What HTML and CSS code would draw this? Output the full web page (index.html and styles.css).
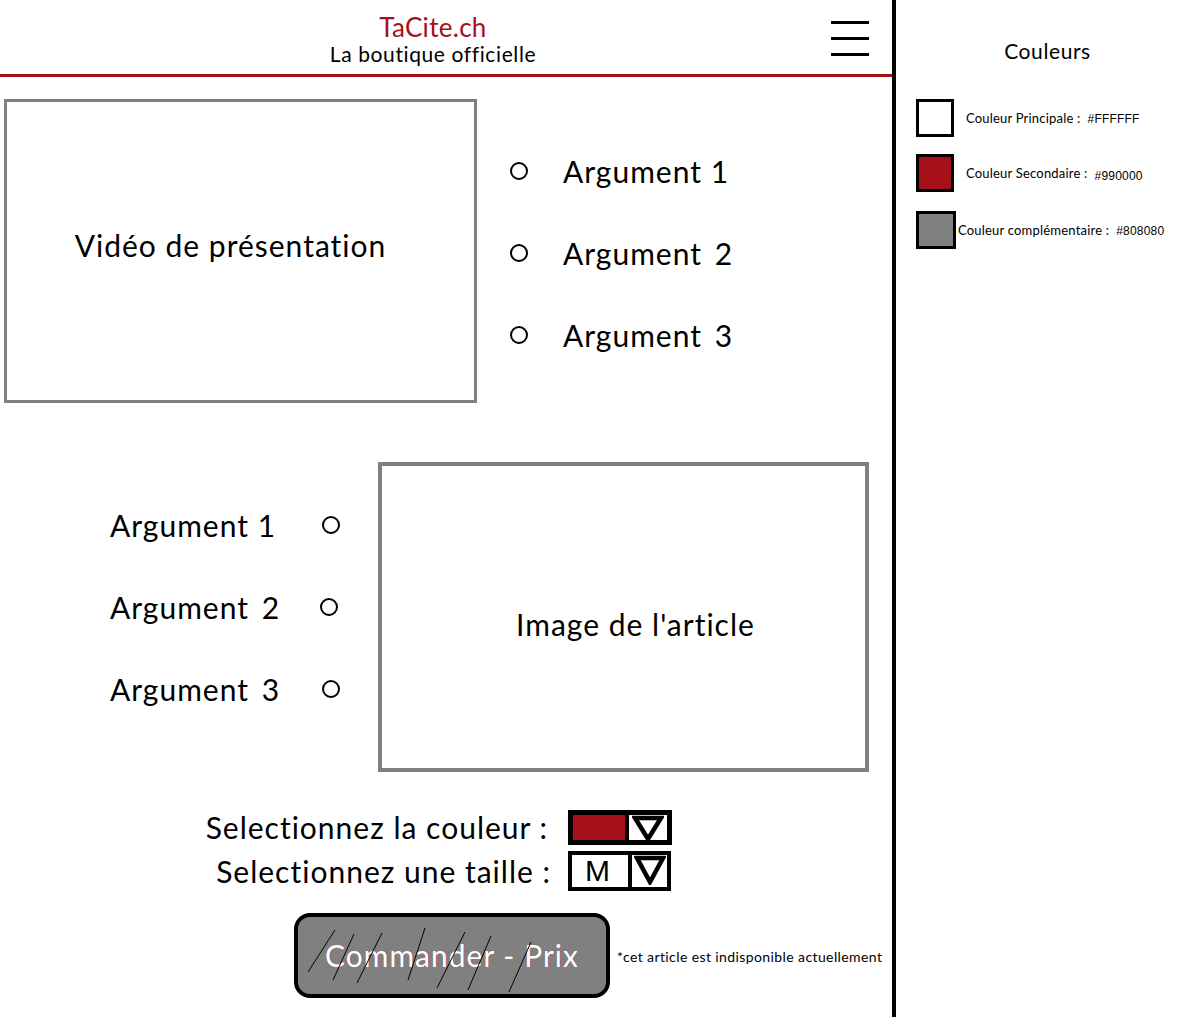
FILE: index.html
```html
<!DOCTYPE html>
<html lang="fr">
<head>
<meta charset="utf-8">
<title>TaCite.ch</title>
<link rel="stylesheet" href="styles.css">
</head>
<body>
<div class="page">
  <main class="main">
    <header class="header">
      <div class="brand">
        <div class="brand-name">TaCite.ch</div>
        <div class="brand-sub">La boutique officielle</div>
      </div>
      <div class="burger"><span></span><span></span><span></span></div>
    </header>

    <section class="intro">
      <div class="video">Vidéo de présentation</div>
      <ul class="args args-right">
        <li><span class="dot"></span><span class="arg">Argument 1</span></li>
        <li><span class="dot"></span><span class="arg arg-wide">Argument 2</span></li>
        <li><span class="dot"></span><span class="arg arg-wide">Argument 3</span></li>
      </ul>
    </section>

    <section class="product">
      <ul class="args args-left">
        <li><span class="arg">Argument 1</span><span class="dot"></span></li>
        <li><span class="arg arg-wide">Argument 2</span><span class="dot dot-shift"></span></li>
        <li><span class="arg arg-wide">Argument 3</span><span class="dot"></span></li>
      </ul>
      <div class="image">Image de l'article</div>
    </section>

    <section class="options">
      <div class="opt-label">Selectionnez la couleur :</div>
      <div class="select select-color">
        <span class="sel-value sel-red"></span>
        <span class="sel-arrow"><svg width="32" height="27" viewBox="0 0 32 27"><polygon points="3,3 29,3 16,24" fill="none" stroke="#000" stroke-width="4.5" stroke-linejoin="miter"/></svg></span>
      </div>
      <div class="opt-label opt-label2">Selectionnez une taille :</div>
      <div class="select select-size">
        <span class="sel-value sel-text">M</span>
        <span class="sel-arrow"><svg width="32" height="30" viewBox="0 0 32 30"><polygon points="3,3 29,3 16,27" fill="none" stroke="#000" stroke-width="4.5" stroke-linejoin="miter"/></svg></span>
      </div>
    </section>

    <section class="order">
      <div class="btn">
        <span class="btn-text">Commander - Prix</span>
        <svg class="slashes" width="316" height="85" viewBox="0 0 316 85">
          <g stroke="#000" stroke-width="1">
            <line x1="14" y1="59" x2="41" y2="17"/>
            <line x1="39" y1="67" x2="60" y2="21"/>
            <line x1="63" y1="70" x2="88" y2="20"/>
            <line x1="114" y1="67" x2="131" y2="15"/>
            <line x1="143" y1="75" x2="171" y2="19"/>
            <line x1="174" y1="77" x2="197" y2="23"/>
            <line x1="215" y1="79" x2="237" y2="29"/>
          </g>
        </svg>
      </div>
      <div class="note">*cet article est indisponible actuellement</div>
    </section>
  </main>

  <aside class="sidebar">
    <h2 class="side-title">Couleurs</h2>
    <ul class="swatches">
      <li><span class="swatch sw-white"></span><span class="sw-label">Couleur Principale :&nbsp; <span class="hex">#FFFFFF</span></span></li>
      <li><span class="swatch sw-red"></span><span class="sw-label">Couleur Secondaire :&nbsp; <span class="hex hex-low">#990000</span></span></li>
      <li class="sw-tight"><span class="swatch sw-gray"></span><span class="sw-label">Couleur complémentaire :&nbsp; <span class="hex">#808080</span></span></li>
    </ul>
  </aside>
</div>
</body>
</html>
```

FILE: styles.css
```css
* { box-sizing: border-box; }

html, body {
  margin: 0;
  padding: 0;
  background: #fff;
}

body {
  font-family: Lato, "Noto Sans", "DejaVu Sans", sans-serif;
  color: #000;
  width: 1187px;
  height: 1017px;
  overflow: hidden;
}

.page {
  display: flex;
  height: 1017px;
}

.main {
  width: 892px;
  flex: none;
}

/* Header */
.header {
  display: grid;
  height: 77px;
  border-bottom: 3px solid #a50f17;
}

.brand {
  grid-area: 1 / 1;
  width: 866px;
  text-align: center;
  padding-top: 13px;
}

.brand-name {
  color: #a50f17;
  font-size: 26px;
  line-height: 29px;
  letter-spacing: 0.3px;
}

.brand-sub {
  font-size: 21px;
  line-height: 24px;
  letter-spacing: 0.6px;
}

.burger {
  grid-area: 1 / 1;
  justify-self: end;
  margin-right: 23px;
  margin-top: 21px;
  width: 38px;
  display: flex;
  flex-direction: column;
  gap: 13px;
}

.burger span {
  display: block;
  height: 3px;
  background: #000;
}

/* Intro */
.intro {
  display: flex;
  margin-top: 22px;
  padding-left: 4px;
}

.video {
  width: 473px;
  height: 304px;
  border: 3px solid #808080;
  display: flex;
  align-items: center;
  justify-content: center;
  font-size: 30px;
  letter-spacing: 1px;
  padding-right: 20px;
  padding-bottom: 12px;
}

.args {
  list-style: none;
  margin: 0;
  padding: 0;
  display: flex;
  flex-direction: column;
  gap: 42px;
}

.args li {
  display: flex;
  align-items: center;
  height: 40px;
}

.arg {
  font-size: 30px;
  letter-spacing: 1px;
  white-space: nowrap;
}

.arg-wide {
  word-spacing: 4px;
}

.dot {
  display: block;
  width: 18px;
  height: 18px;
  border: 2.5px solid #000;
  border-radius: 50%;
  flex: none;
}

.args-right {
  margin-left: 33px;
  margin-top: 52px;
}

.args-right .dot {
  margin-right: 35px;
}

/* Product */
.product {
  display: flex;
  margin-top: 59px;
}

.args-left {
  width: 378px;
  padding-left: 110px;
  margin-top: 43px;
}

.args-left .arg {
  width: 212px;
}

.dot-shift {
  margin-left: -2px;
}

.image {
  width: 491px;
  height: 310px;
  border: 4px solid #808080;
  display: flex;
  align-items: center;
  justify-content: center;
  font-size: 30px;
  letter-spacing: 1px;
  padding-left: 24px;
  padding-top: 14px;
}

/* Options */
.options {
  display: grid;
  grid-template-columns: 568px auto;
  row-gap: 6px;
  margin-top: 38px;
  justify-content: start;
}

.opt-label {
  font-size: 30px;
  letter-spacing: 1px;
  text-align: right;
  padding-right: 20px;
  line-height: 35px;
  align-self: center;
}

.opt-label2 {
  padding-right: 17px;
}

.select {
  display: flex;
  border: 5px solid #000;
  width: 104px;
}

.select-color {
  height: 35px;
}

.select-size {
  height: 40px;
  width: 103px;
  border-width: 4px;
}

.sel-value {
  width: 56px;
  border-right: 4px solid #000;
  flex: none;
}

.sel-red {
  background: #a50f17;
}

.sel-text {
  width: 60px;
  font-size: 30px;
  line-height: 32px;
  padding-left: 13px;
  font-family: "Liberation Sans", Arial, sans-serif;
}

.sel-arrow {
  flex: 1;
  display: flex;
  align-items: flex-start;
  justify-content: center;
}

.sel-arrow svg {
  display: block;
}

/* Order */
.order {
  display: flex;
  align-items: center;
  padding-left: 294px;
  margin-top: 22px;
}

.btn {
  position: relative;
  width: 316px;
  height: 85px;
  border: 4px solid #000;
  border-radius: 16px;
  background: #808080;
  display: flex;
  align-items: center;
  justify-content: center;
  flex: none;
}

.btn-text {
  color: #fff;
  font-size: 30px;
  letter-spacing: 1px;
  padding-bottom: 2px;
  text-shadow: 1px 0 0 rgba(200, 20, 60, 0.35);
}

.slashes {
  position: absolute;
  left: -4px;
  top: -4px;
}

.note {
  font-size: 14px;
  letter-spacing: 0.4px;
  margin-left: 7px;
  margin-top: 2px;
  white-space: nowrap;
}

/* Sidebar */
.sidebar {
  flex: 1;
  border-left: 4px solid #000;
  padding-top: 37px;
  padding-left: 20px;
}

.side-title {
  font-size: 21px;
  letter-spacing: 0.6px;
  font-weight: normal;
  margin: 0;
  text-align: center;
  padding-right: 8px;
  line-height: 28px;
}

.swatches {
  list-style: none;
  margin: 34px 0 0 0;
  padding: 0;
  display: flex;
  flex-direction: column;
  gap: 17px;
}

.swatches li {
  display: flex;
  align-items: center;
  gap: 12px;
}

.swatches li.sw-tight {
  gap: 2px;
  margin-top: 2px;
}

.swatch {
  display: block;
  width: 38px;
  height: 38px;
  border: 3px solid #000;
  flex: none;
}

.sw-white { background: #fff; }
.sw-red { background: #a50f17; }
.sw-gray { background: #808080; width: 40px; }

.sw-label {
  font-size: 13px;
  letter-spacing: 0.2px;
  white-space: nowrap;
}

.hex {
  font-size: 12px;
  font-family: "Liberation Sans", Arial, sans-serif;
}

.hex-low {
  position: relative;
  top: 2px;
}
```
